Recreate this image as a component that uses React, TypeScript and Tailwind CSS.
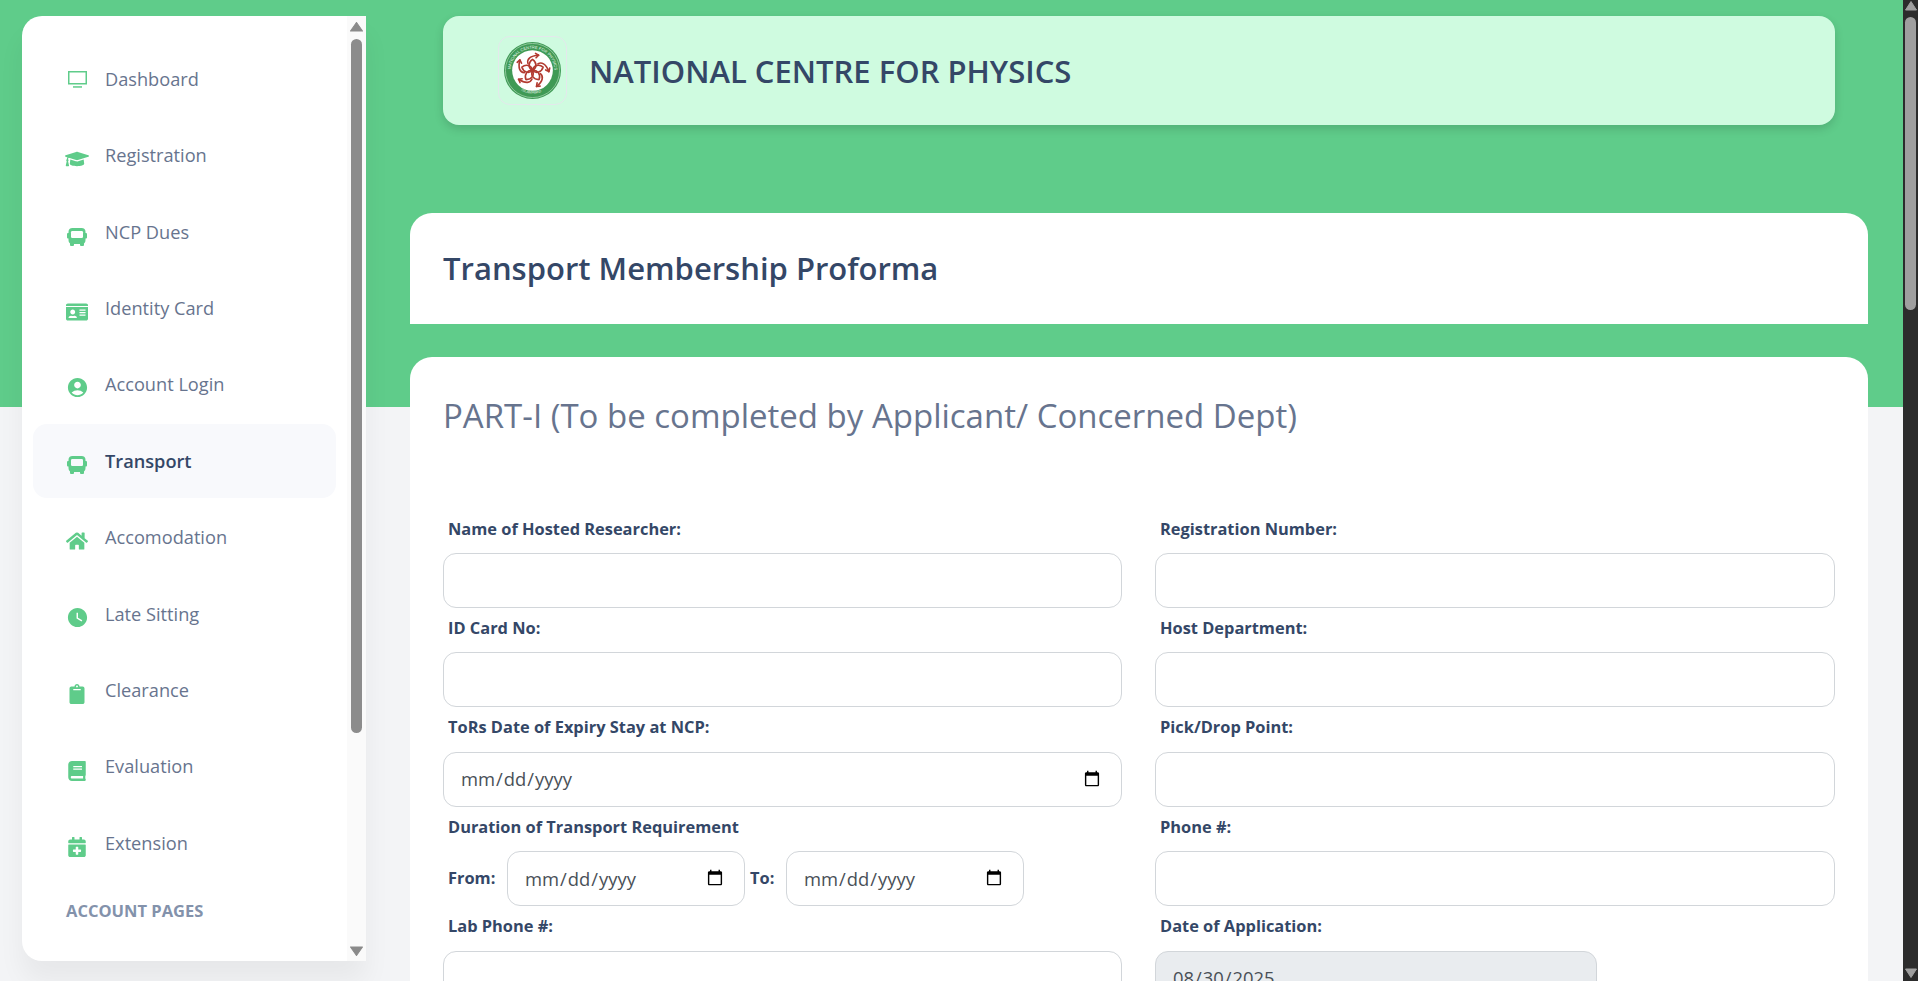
import type { ReactNode } from 'react';
import { FaBook, FaCalendarPlus, FaClipboard, FaGraduationCap, FaHome, FaIdCard } from 'react-icons/fa';
import { MdAccountCircle, MdWatchLater } from 'react-icons/md';

const MonitorIcon = () => (
  <svg viewBox="0 0 19 17" className="h-[17px] w-[19px]">
    <rect x="0.75" y="0.75" width="17.500" height="12" fill="none" stroke="currentColor" strokeWidth="1.500" />
    <rect x="5" y="15.200" width="9" height="1.500" fill="currentColor" />
  </svg>
);

const BusIcon = ({ className, windowFill = '#ffffff' }: { className: string; windowFill?: string }) => (
  <svg viewBox="0 0 20 18" className={`h-[18px] w-[20px] ${className}`}>
    <rect x="1.500" y="0" width="17" height="16" rx="4" fill="currentColor" />
    <rect x="0" y="5" width="3" height="5.500" rx="1" fill="currentColor" />
    <rect x="17" y="5" width="3" height="5.500" rx="1" fill="currentColor" />
    <rect x="3" y="14" width="4" height="4" rx="1" fill="currentColor" />
    <rect x="13" y="14" width="4" height="4" rx="1" fill="currentColor" />
    <rect x="4" y="3" width="12" height="7" rx="1.200" fill={windowFill} />
  </svg>
);

const navItems: { label: string; icon: ReactNode; active?: boolean }[] = [
  { label: 'Dashboard', icon: <MonitorIcon /> },
  { label: 'Registration', icon: <FaGraduationCap className="h-[24px] w-[24px] translate-y-[4px]" /> },
  { label: 'NCP Dues', icon: <BusIcon className="translate-y-[5px]" /> },
  { label: 'Identity Card', icon: <FaIdCard className="h-[22px] w-[22px] translate-y-[4px]" /> },
  { label: 'Account Login', icon: <MdAccountCircle className="h-[23px] w-[23px] translate-y-[3px]" /> },
  { label: 'Transport', icon: <BusIcon className="translate-y-[4px]" windowFill="#f8f9fc" />, active: true },
  { label: 'Accomodation', icon: <FaHome className="h-[22px] w-[22px] translate-y-[4px]" /> },
  { label: 'Late Sitting', icon: <MdWatchLater className="h-[23px] w-[23px] translate-y-[4px]" /> },
  { label: 'Clearance', icon: <FaClipboard className="h-[20px] w-[20px] translate-y-[4px]" /> },
  { label: 'Evaluation', icon: <FaBook className="h-[20px] w-[20px] translate-y-[4px]" /> },
  { label: 'Extension', icon: <FaCalendarPlus className="h-[20px] w-[20px] translate-y-[4px]" /> },
];

const Logo = () => {
  const petals = [0, 72, 144, 216, 288];
  return (
    <svg viewBox="0 0 56 56" className="h-[57px] w-[57px]">
      <defs>
        <path id="ringTop" d="M6.500 28a21.500 21.500 0 0 1 43 0" />
        <path id="ringBottom" d="M12 44a22.500 22.500 0 0 0 32 0" />
      </defs>
      <circle cx="28" cy="28" r="28" fill="#3f9a55" />
      <circle cx="28" cy="28" r="26.600" fill="none" stroke="#d9efdd" strokeWidth="0.500" />
      <circle cx="28" cy="28" r="20" fill="#ffffff" />
      <text fontSize="4" fill="#e6f5e9" fontFamily="'Liberation Sans', sans-serif">
        <textPath href="#ringTop" startOffset="2%">NATIONAL CENTRE FOR PHYSICS</textPath>
      </text>
      <text fontSize="3.600" fill="#e6f5e9" fontFamily="'Liberation Sans', sans-serif">
        <textPath href="#ringBottom" startOffset="17%">ISLAMABAD</textPath>
      </text>
      <g fill="none" stroke="#b23a30" strokeWidth="1.600" strokeLinecap="round" strokeLinejoin="round">
        {petals.map((a) => (
          <g key={a} transform={`rotate(${a} 28 28)`}>
            <path d="M28 28c-4.500-2.500-4.500-8 0-11c4.500 3 4.500 8.500 0 11" />
            <path d="M23.500 21c-1-4 2-7.500 10.500-8" />
            <path d="M34 13l-3-1.800M34 13l-2.500 2.500" />
          </g>
        ))}
      </g>
    </svg>
  );
};

const Triangle = ({ down, className }: { down?: boolean; className: string }) => (
  <svg viewBox="0 0 12 10" preserveAspectRatio="none" className={className}>
    <path d={down ? 'M0.500 1h11L6 9.500z' : 'M6 0.500L11.500 9H0.500z'} fill="currentColor" stroke="currentColor" strokeLinejoin="round" />
  </svg>
);

const labelClass = 'block h-[44.4px] pl-[5px] pt-[8px] text-[16.4px] font-bold leading-6 text-[#344767]';
const inputClass =
  'block h-[55px] w-full rounded-[13px] border border-[#d2d6da] bg-white pl-[16px] pr-[18px] text-[18.4px] text-[#495057] outline-none';

const Field = ({ label, type = 'text' }: { label: string; type?: string }) => (
  <div>
    <label className={labelClass}>{label}</label>
    <input type={type} className={inputClass} />
  </div>
);

export default function App() {
  return (
    <div className="flex h-[981px] w-[1918px] overflow-hidden bg-[linear-gradient(#5fcc8a_407px,#f3f4f6_407px)] font-['Open_Sans',sans-serif]">
      {/* Sidebar */}
      <aside className="mb-[20px] ml-[22px] mt-[16px] flex h-[945px] w-[344px] shrink-0 overflow-hidden rounded-l-[20px] bg-white shadow-[0_20px_27px_rgba(0,0,0,0.05)]">
        <div className="w-[325px] pl-[11px] pt-[26px]">
          <ul className="flex w-[303px] flex-col gap-[2.4px]">
            {navItems.map((item) => (
              <li
                key={item.label}
                className={`flex h-[74px] items-center rounded-[14px] pl-[32px] ${item.active ? 'bg-[#f8f9fc]' : ''}`}
              >
                <span className="flex h-[24px] w-[24px] items-center justify-center text-[#5fcc8a]">{item.icon}</span>
                <span
                  className={`ml-[16px] pt-[1px] text-[18.2px] ${item.active ? 'font-semibold text-[#344767]' : 'text-[#67748e]'}`}
                >
                  {item.label}
                </span>
              </li>
            ))}
          </ul>
          <div className="mt-[19px] pl-[33px] text-[16.5px] font-bold leading-6 text-[#8392ab]">ACCOUNT PAGES</div>
        </div>
        <div className="flex w-[19px] flex-col items-center bg-[#fafafa] pt-[6px] text-[#8a8a8a]">
          <Triangle className="h-[10px] w-[13px]" />
          <div className="mt-[7px] h-[694px] w-[11px] rounded-full bg-[#8c8c8c]" />
          <Triangle down className="mt-[213px] h-[10px] w-[13px]" />
        </div>
      </aside>

      {/* Main */}
      <main className="ml-[44px] w-[1458px] shrink-0">
        <header className="mx-[33px] mt-[16px] flex h-[109px] items-center rounded-[16px] bg-[#cffbe0] pl-[55px] shadow-[0_4px_10px_rgba(0,0,0,0.14)]">
          <div className="flex h-[69px] w-[69px] items-center justify-center rounded-[12px] border border-[#e4e8ec]">
            <Logo />
          </div>
          <h1 className="ml-[22px] pt-[2px] text-[31px] font-semibold text-[#344767]">NATIONAL CENTRE FOR PHYSICS</h1>
        </header>

        <section className="mt-[88px] flex h-[111px] items-center rounded-t-[22px] bg-white px-[33px]">
          <h2 className="text-[31px] font-semibold text-[#344767]">Transport Membership Proforma</h2>
        </section>

        <section className="mt-[33px] rounded-t-[22px] bg-white px-[33px] pb-[40px] pt-[36px]">
          <h3 className="text-[33px] font-normal leading-[46px] text-[#67748e]">
            PART-I (To be completed by Applicant/ Concerned Dept)
          </h3>
          <div className="mt-[69.600px] grid grid-cols-[679px_1fr] gap-x-[33px]">
            <Field label="Name of Hosted Researcher:" />
            <Field label="Registration Number:" />
            <Field label="ID Card No:" />
            <Field label="Host Department:" />
            <Field label="ToRs Date of Expiry Stay at NCP:" type="date" />
            <Field label="Pick/Drop Point:" />
            <div>
              <label className={labelClass}>Duration of Transport Requirement</label>
              <div className="flex h-[55px] items-center pl-[5px] text-[16.4px] font-bold text-[#344767]">
                <span className="w-[59px]">From:</span>
                <input type="date" className={`${inputClass} !w-[238px] font-normal`} />
                <span className="ml-[5px] w-[36px]">To:</span>
                <input type="date" className={`${inputClass} !w-[238px] font-normal`} />
              </div>
            </div>
            <Field label="Phone #:" />
            <Field label="Lab Phone #:" />
            <div>
              <label className={labelClass}>Date of Application:</label>
              <input
                type="date"
                disabled
                defaultValue="2025-08-30"
                className={`${inputClass} !w-[442px] !bg-[#e9ecef]`}
              />
            </div>
          </div>
        </section>
      </main>

      {/* Page scrollbar */}
      <div className="ml-[35px] flex w-[15px] shrink-0 flex-col items-center bg-[#2c2c2c] pt-px text-[#9f9f9f]">
        <Triangle className="h-[10px] w-[12px]" />
        <div className="mt-[6px] h-[293px] w-[11px] rounded-full bg-[#9f9f9f]" />
        <Triangle down className="mt-[658px] h-[10px] w-[12px]" />
      </div>
    </div>
  );
}
